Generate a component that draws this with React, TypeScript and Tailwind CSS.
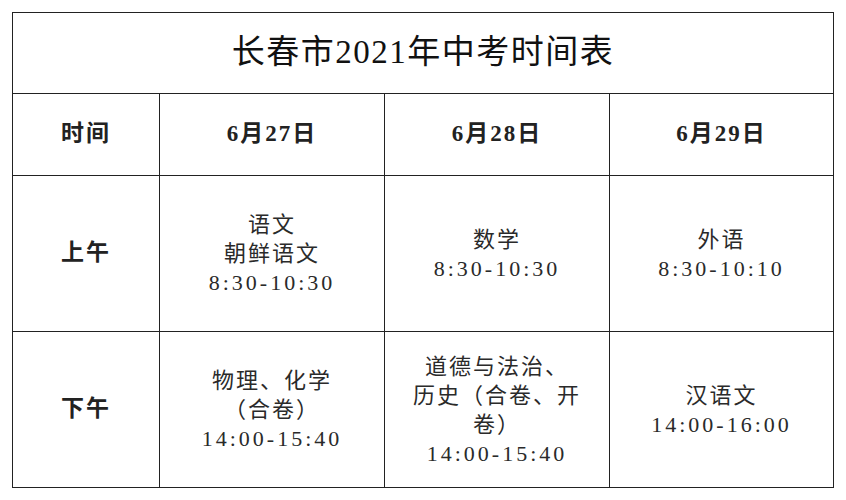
const serif = "font-['Liberation_Serif','Noto_Sans_CJK_SC',serif]";

const cell = "border-[1.5px] border-[#222] text-center align-middle p-0";

function Lines({ lines }: { lines: string[] }) {
  return (
    <div className="flex flex-col items-center text-[22px] leading-[29px] text-[#2a2a2a]">
      {lines.map((l) => (
        <span
          key={l}
          className={/\d/.test(l) ? "tracking-[3px]" : "tracking-[2px]"}
        >
          {l}
        </span>
      ))}
    </div>
  );
}

export default function App() {
  return (
    <div className={`min-h-screen bg-white pt-[12px] pl-[12px] ${serif}`}>
      <table className="table-fixed border-collapse w-[821px]">
        <colgroup>
          <col className="w-[147px]" />
          <col className="w-[225px]" />
          <col className="w-[225px]" />
          <col className="w-[224px]" />
        </colgroup>
        <tbody>
          <tr className="h-[81px]">
            <td
              colSpan={4}
              className={`${cell} text-[33px] tracking-[1.5px] text-[#111]`}
            >
              长春市2021年中考时间表
            </td>
          </tr>
          <tr className="h-[82px] text-[23px] font-bold tracking-[2px] text-[#222]">
            <td className={cell}>时间</td>
            <td className={cell}>6月27日</td>
            <td className={cell}>6月28日</td>
            <td className={cell}>6月29日</td>
          </tr>
          <tr className="h-[156px]">
            <td className={`${cell} text-[23px] font-bold tracking-[2px] text-[#222]`}>
              上午
            </td>
            <td className={cell}>
              <Lines lines={["语文", "朝鲜语文", "8:30-10:30"]} />
            </td>
            <td className={cell}>
              <Lines lines={["数学", "8:30-10:30"]} />
            </td>
            <td className={cell}>
              <Lines lines={["外语", "8:30-10:10"]} />
            </td>
          </tr>
          <tr className="h-[156px]">
            <td className={`${cell} text-[23px] font-bold tracking-[2px] text-[#222]`}>
              下午
            </td>
            <td className={cell}>
              <Lines lines={["物理、化学", "（合卷）", "14:00-15:40"]} />
            </td>
            <td className={cell}>
              <Lines
                lines={["道德与法治、", "历史（合卷、开", "卷）", "14:00-15:40"]}
              />
            </td>
            <td className={cell}>
              <Lines lines={["汉语文", "14:00-16:00"]} />
            </td>
          </tr>
        </tbody>
      </table>
    </div>
  );
}
